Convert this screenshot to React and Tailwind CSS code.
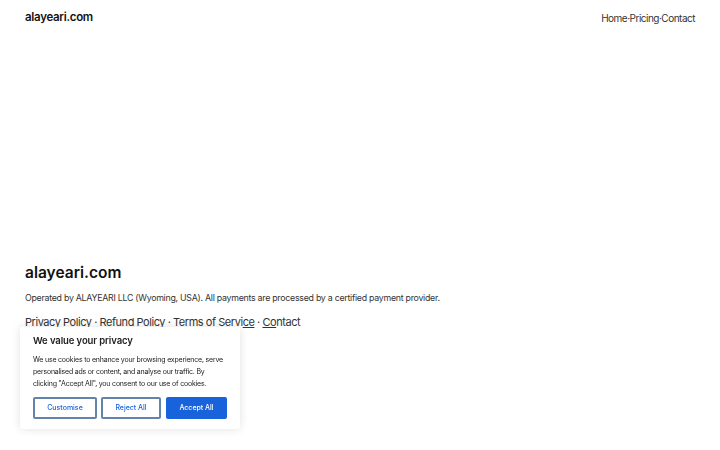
import React from "react";

const font = { fontFamily: "Inter, 'Noto Sans', sans-serif" };

const CookieBanner = () => (
  <div className="fixed left-[20px] bottom-[21px] w-[220px] bg-white rounded-[3px] shadow-[0_0_10px_rgba(0,0,0,0.12)] px-[13px] pt-[8px] pb-[10px]">
    <h4 className="text-[9.5px] font-semibold text-[#212121] leading-[12px] tracking-[-0.1px]">
      We value your privacy
    </h4>
    <p className="mt-[7px] text-[7px] leading-[12px] text-[#212121] tracking-[-0.2px]">
      We use cookies to enhance your browsing experience, serve personalised ads or
      content, and analyse our traffic. By clicking "Accept All", you consent to our use
      of cookies.
    </p>
    <div className="mt-[7px] flex gap-[4px]">
      <button className="w-[64px] h-[22px] border-2 border-[#6283ab] rounded-[2px] text-[7px] font-medium text-[#1863dc]">
        Customise
      </button>
      <button className="w-[60px] h-[22px] border-2 border-[#6283ab] rounded-[2px] text-[7px] font-medium text-[#1863dc]">
        Reject All
      </button>
      <button className="w-[61px] h-[22px] ml-[1px] bg-[#1863dc] border-2 border-[#1863dc] rounded-[2px] text-[7px] font-medium text-white">
        Accept All
      </button>
    </div>
  </div>
);

export default function App() {
  return (
    <div className="min-h-[450px] bg-white flex flex-col" style={font}>
      <header className="h-[36px] px-[25px] flex items-center justify-between">
        <a className="text-[11.5px] font-semibold text-[#111] tracking-[-0.3px]">alayeari.com</a>
        <nav className="text-[10px] text-[#333] tracking-[-0.5px]">
          Home·Pricing·Contact
        </nav>
      </header>

      <main className="h-[225px]" />

      <footer className="px-[25px]">
        <h2 className="text-[15.5px] font-semibold text-[#111] leading-[24px]">alayeari.com</h2>
        <p className="mt-[6px] text-[8.8px] text-[#333] leading-[14px] tracking-[-0.26px]">
          Operated by ALAYEARI LLC (Wyoming, USA). All payments are processed by a certified
          payment provider.
        </p>
        <p className="mt-[8px] text-[11px] text-[#333] leading-[18px] tracking-[-0.45px]">
          Privacy Policy · Refund Policy · Terms of Servi
          <span className="underline">ce</span> · <span className="underline">Co</span>ntact
        </p>
      </footer>

      <CookieBanner />
    </div>
  );
}
